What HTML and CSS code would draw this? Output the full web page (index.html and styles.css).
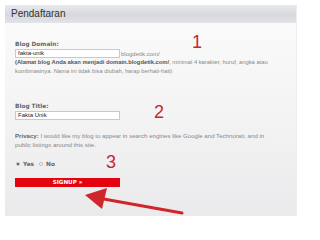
FILE: index.html
```html
<!DOCTYPE html>
<html>
<head>
<meta charset="utf-8">
<link rel="stylesheet" href="styles.css">
</head>
<body>
<div class="panel">
  <div class="panel-head">Pendaftaran</div>
  <div class="panel-body">
    <div class="label">Blog Domain:</div>
    <div class="domain-row">
      <div class="field">fakta-unik</div>
      <span class="suffix">blogdetik.com/</span>
    </div>
    <div class="help"><b>(Alamat blog Anda akan menjadi domain.blogdetik.com/</b><span>, minimal 4 karakter, huruf, angka atau</span><br><span>kombinasinya. Nama ini tidak bisa diubah, harap berhati-hati)</span></div>

    <div class="label title-label">Blog Title:</div>
    <div class="field">Fakta Unik</div>

    <div class="privacy"><b>Privacy:</b> <span>I would like my blog to appear in search engines like Google and Technorati, and in</span><br><span>public listings around this site.</span></div>

    <div class="radios">
      <span class="radio checked"></span><span class="opt">Yes</span>
      <span class="radio"></span><span class="opt">No</span>
    </div>

    <div class="signup">SIGNUP »</div>
  </div>
</div>

<span class="num n1">1</span>
<span class="num n2">2</span>
<span class="num n3">3</span>

<svg class="arrow" width="300" height="220" viewBox="0 0 300 220">
  <line x1="98" y1="198" x2="182" y2="213" stroke="#d0262b" stroke-width="3" stroke-linecap="round"/>
  <polygon points="85,195 107,188 102,209" fill="#d0262b"/>
</svg>
</body>
</html>
```

FILE: styles.css
```css
html, body {
  margin: 0;
  padding: 0;
  background: #ffffff;
}
body {
  width: 300px;
  height: 220px;
  overflow: hidden;
  position: relative;
  font-family: "Liberation Sans", Arial, sans-serif;
}
.panel {
  margin: 5px 0 0 5px;
  width: 292px;
  height: 211px;
  display: flex;
  flex-direction: column;
  border-right: 1px solid #ececee;
  box-sizing: border-box;
}
.panel-head {
  height: 18px;
  line-height: 18px;
  padding-left: 6px;
  font-size: 10px;
  color: #333;
  background: linear-gradient(#e8e9ec, #d6d8dd 55%, #e2e3e7);
  border-bottom: 1px solid #fbfbfb;
}
.panel-body {
  flex: 1;
  padding: 16px 0 0 10px;
  background: linear-gradient(#fafafa, #f3f3f4 50%, #eaeaec);
  display: flex;
  flex-direction: column;
  align-items: flex-start;
}
.label {
  font-family: "DejaVu Sans", Verdana, sans-serif;
  font-weight: bold;
  font-size: 5.8px;
  line-height: 8px;
  height: 8px;
  color: #666;
  margin-bottom: 1px;
}
.title-label {
  margin-top: 26px;
}
.domain-row {
  display: flex;
  align-items: center;
}
.field {
  width: 105px;
  height: 9px;
  box-sizing: border-box;
  border: 1px solid #c9c9c9;
  background: #fff;
  font-size: 6px;
  line-height: 7px;
  padding-left: 2px;
  color: #222;
}
.suffix {
  margin-left: 1px;
  font-size: 6px;
  color: #888;
}
.help {
  width: 280px;
  font-size: 5.8px;
  line-height: 9px;
  color: #888;
}
.help b {
  color: #555;
}
.privacy {
  margin-top: 11px;
  width: 280px;
  font-size: 6.1px;
  line-height: 9px;
  color: #888;
}
.privacy b {
  color: #666;
}
.radios {
  margin-top: 10px;
  height: 9px;
  display: flex;
  align-items: center;
  padding-left: 1px;
}
.radio {
  width: 4px;
  height: 4px;
  border-radius: 50%;
  border: 1px solid #b8b8b8;
  background: #fff;
  box-sizing: border-box;
}
.radio.checked {
  background: radial-gradient(circle, #555 0 1px, #fff 1.5px);
}
.opt {
  font-family: "DejaVu Sans", Verdana, sans-serif;
  font-weight: bold;
  font-size: 5.8px;
  color: #666;
  margin: 0 5px 0 3px;
}
.signup {
  margin-top: 10px;
  width: 105px;
  height: 9px;
  line-height: 9px;
  background: #e4040f;
  color: #fff;
  text-align: center;
  font-family: "DejaVu Sans", Verdana, sans-serif;
  font-weight: bold;
  font-size: 5.6px;
}
.num {
  position: absolute;
  font-family: "Liberation Sans", Arial, sans-serif;
  font-size: 18px;
  line-height: 18px;
  color: #c8272d;
}
.n1 { left: 192px; top: 33px; }
.n2 { left: 154px; top: 103px; }
.n3 { left: 106px; top: 153px; }
.arrow {
  position: absolute;
  left: 0;
  top: 0;
}
```
